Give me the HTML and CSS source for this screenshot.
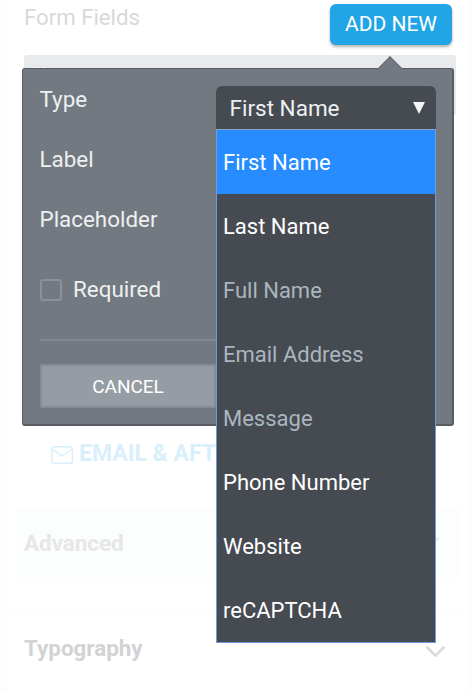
FILE: index.html
```html
<!DOCTYPE html>
<html lang="en">
<head>
<meta charset="utf-8">
<title>Form Fields</title>
<link rel="stylesheet" href="styles.css">
</head>
<body>
<div class="page">
  <section class="fields">
    <header class="fields-head">
      <h2 class="fields-title">Form Fields</h2>
      <button class="add-btn">ADD NEW</button>
    </header>
    <div class="field-bar"><span class="field-bar-text">Name</span></div>

    <div class="popover">
      <span class="popover-arrow"></span>
      <div class="pop-row">
        <span class="pop-label">Type</span>
        <div class="select">
          <div class="select-value">First Name<span class="select-caret"></span></div>
          <ul class="select-list">
            <li class="opt opt-active">First Name</li>
            <li class="opt">Last Name</li>
            <li class="opt opt-off">Full Name</li>
            <li class="opt opt-off">Email Address</li>
            <li class="opt opt-off">Message</li>
            <li class="opt">Phone Number</li>
            <li class="opt">Website</li>
            <li class="opt">reCAPTCHA</li>
          </ul>
        </div>
      </div>
      <div class="pop-row pop-plain"><span class="pop-label">Label</span></div>
      <div class="pop-row pop-plain"><span class="pop-label">Placeholder</span></div>
      <label class="pop-check"><span class="check-box"></span><span class="pop-label">Required</span></label>
      <hr class="pop-rule">
      <div class="pop-actions">
        <button class="cancel-btn">CANCEL</button>
      </div>
    </div>

    <a class="email-link">
      <svg class="mail-icon" viewBox="0 0 22 18" width="22" height="18" aria-hidden="true"><rect x="0.75" y="0.75" width="20.5" height="16.5" rx="2" fill="none" stroke="currentColor" stroke-width="1.5"/><path d="M1 3l10 7 10-7" fill="none" stroke="currentColor" stroke-width="1.5"/></svg>
      <span>EMAIL &amp; AFTER SUBMIT</span>
    </a>
  </section>

  <section class="panel panel-advanced">
    <h3 class="panel-title">Advanced</h3>
    <svg class="chev" viewBox="0 0 20 12" width="21" height="13" aria-hidden="true"><path d="M1.500 1.500L10 10l8.500-8.500" fill="none" stroke="currentColor" stroke-width="2.500"/></svg>
  </section>
  <section class="panel panel-type">
    <h3 class="panel-title">Typography</h3>
    <svg class="chev" viewBox="0 0 20 12" width="21" height="13" aria-hidden="true"><path d="M1.500 1.500L10 10l8.500-8.500" fill="none" stroke="currentColor" stroke-width="2.500"/></svg>
  </section>
</div>
</body>
</html>
```
FILE: styles.css
```css
* { box-sizing: border-box; }
html, body { margin: 0; height: 100%; }
body {
  background: #fff;
  font-family: Roboto, "Liberation Sans", sans-serif;
  overflow: hidden;
}
.page {
  position: relative;
  width: 472px;
  height: 691px;
  overflow: hidden;
  background: #fff;
  padding: 0 8px;
  box-shadow: inset 8px 0 0 #fdfdfd, inset -4px 0 0 #fdfdfd;
}
.fields {
  position: relative;
  height: 509px;
  padding: 0 16px;
}
.fields-head {
  display: flex;
  justify-content: space-between;
  align-items: flex-start;
  height: 55px;
  padding-top: 4px;
  margin-right: -4px;
}
.fields-title {
  margin: 0;
  font-size: 22.2px;
  font-weight: 400;
  line-height: 26px;
  color: #d8d9da;
}
.add-btn {
  width: 122px;
  height: 41px;
  border: 0;
  border-radius: 6px;
  background: #22a5e6;
  color: #fff;
  font: 400 21px Roboto, sans-serif;
  padding: 0 0 2px;
  box-shadow: 0 2px 3px rgba(0,0,0,.3);
}
.field-bar {
  height: 60px;
  margin-right: -8px;
  background: #e9eaec;
  border-radius: 3px 3px 0 0;
  padding: 8px 8px;
  overflow: hidden;
}
.field-bar-text { color: #fff; font-size: 20px; }
.popover {
  position: absolute;
  left: 14px;
  top: 68px;
  width: 432px;
  height: 358px;
  background: #727980;
  border: 2px solid #565c62;
  border-width: 1px 2px 2px 1px;
  border-radius: 3px;
  padding: 17px 16px 0 17px;
}
.popover-arrow {
  position: absolute;
  right: 53px;
  top: -9px;
  width: 18px;
  height: 18px;
  background: #727980;
  transform: rotate(45deg);
  border-top: 1px solid #62686e;
  border-left: 1px solid #62686e;
}
.pop-row { display: flex; justify-content: space-between; align-items: flex-start; height: 60px; }
.pop-label { color: #eef0f1; font-size: 22.4px; line-height: 26px; margin-left: -0.5px; }
.select { position: relative; width: 220px; }
.select-value {
  position: relative;
  height: 43px;
  background: #464a51;
  border-radius: 6px 6px 0 0;
  color: #eef0f1;
  font-size: 22.5px;
  line-height: 45px;
  padding-left: 13.500px;
}
.select-caret {
  position: absolute;
  right: 11px;
  top: 16px;
  border-left: 6px solid transparent;
  border-right: 6px solid transparent;
  border-top: 12px solid #f4f5f6;
}
.select-list {
  position: absolute;
  z-index: 2;
  top: 43px;
  left: 0;
  width: 220px;
  margin: 0;
  padding: 0;
  list-style: none;
  background: #464a51;
  border: 1px solid #6d9ae0;
  border-top-color: #8aa4c8;
}
.opt {
  height: 64px;
  line-height: 66px;
  padding-left: 6px;
  color: #fff;
  font-size: 22px;
}
.opt-active { background: #268cff; }
.opt-off { color: #aab6bf; }
.pop-check { display: flex; align-items: center; gap: 11px; height: 28px; margin-top: 10px; }
.pop-check .pop-label { margin: 0 0 2px; }
.check-box {
  width: 22px;
  height: 22px;
  border: 2px solid #8b9198;
  border-radius: 3px;
}
.pop-rule {
  margin: 35px -1px 0 0;
  border: 0;
  height: 2px;
  background: #808890;
}
.pop-actions { margin-top: 23px; }
.cancel-btn {
  display: block;
  width: 176px;
  height: 44px;
  background: #969ca3;
  border: 2px solid #868c93;
  border-radius: 2px;
  color: #fff;
  font: 400 19px Roboto, sans-serif;
}
.email-link {
  position: absolute;
  left: 43px;
  top: 440px;
  display: flex;
  align-items: center;
  gap: 6px;
  color: #d9effb;
  font-size: 23px;
  font-weight: 700;
  white-space: nowrap;
}
.mail-icon { margin-top: 3px; }
.panel {
  display: flex;
  justify-content: space-between;
  align-items: center;
  height: 69px;
  padding: 0 20px 0 8px;
}
.panel-advanced { margin: 0 0 0 8px; width: 444px; background: #fcfdfd; }
.panel-type { margin-top: 34px; height: 72px; padding: 0 18px 0 16px; border-top: 1px solid #fbfcfc; box-shadow: 0 -3px 3px #fcfdfd; }
.panel-title { margin: 0 0 2px; font-size: 22.4px; font-weight: 700; }
.panel-advanced .panel-title { color: #e6e7e8; }
.panel-type .panel-title { color: #d2d3d4; }
.panel-advanced .chev { color: #ecedee; margin-top: -2px; }
.panel-type .chev { color: #d9dadb; margin-top: 6px; }
```
